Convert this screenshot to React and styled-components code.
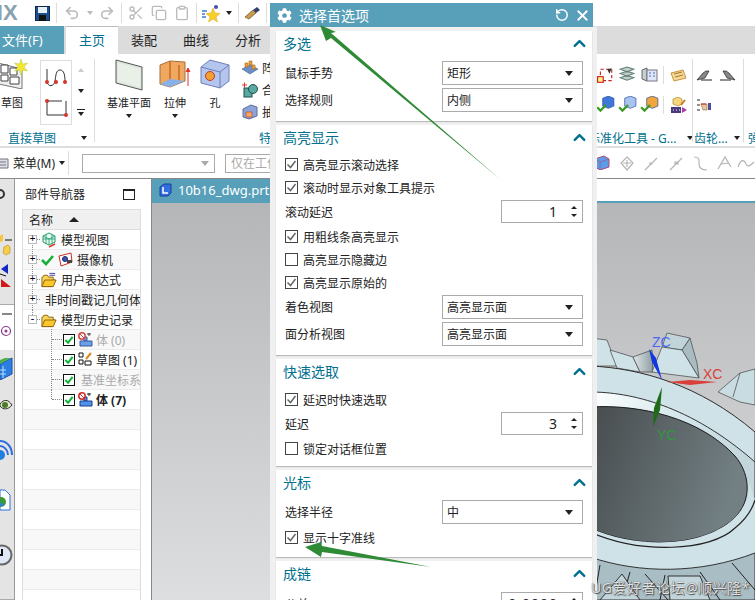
import React from "react";
import styled, { createGlobalStyle } from "styled-components";
import { FaCog } from "react-icons/fa";
import { ChevronUp, Clipboard, Copy, Redo2, RotateCcw, Scissors, Undo2, X } from "lucide-react";

const TEAL = "#589fb9";
const INK = "#00708f";

const GlobalStyle = createGlobalStyle`
  html, body { margin: 0; padding: 0; background: #fff; }
  body {
    font-family: "Noto Sans", "Noto Sans CJK SC", sans-serif;
    font-size: 12px;
    color: #222;
  }
`;

const Page = styled.div`
  position: relative;
  width: 755px;
  height: 600px;
  overflow: hidden;
  display: flex;
  flex-direction: column;
`;

/* quick access bar */
const Quick = styled.div`
  height: 26px;
  display: flex;
  align-items: center;
  background: #fff;
  flex: none;
`;
const Logo = styled.span`
  font-family: "Liberation Sans", sans-serif;
  font-weight: bold;
  font-size: 22px;
  color: #8aa1b0;
  margin-left: -13px;
  width: 48px;
  flex: none;
`;
const QuickBtn = styled.span`
  width: ${(p) => p.$w || 22}px;
  display: flex;
  justify-content: center;
  align-items: center;
  flex: none;
`;
const Caret = styled.i`
  display: block;
  flex: none;
  width: 0;
  height: 0;
  border-left: ${(p) => p.$s || 4}px solid transparent;
  border-right: ${(p) => p.$s || 4}px solid transparent;
  border-top: ${(p) => (p.$s || 4) + 1}px solid ${(p) => p.$c || "#222"};
`;
const CaretUp = styled(Caret)`
  transform: rotate(180deg);
`;

/* tabs */
const Tabs = styled.div`
  height: 28px;
  flex: none;
  display: flex;
  background: #dcdcdc;
`;
const FileTab = styled.div`
  width: 64px;
  margin-right: 2px;
  background: ${TEAL};
  color: #fff;
  font-size: 13px;
  line-height: 28px;
  padding-left: 2px;
  box-sizing: border-box;
`;
const Tab = styled.div`
  width: 52px;
  text-align: center;
  font-size: 13px;
  line-height: 28px;
  color: ${(p) => (p.$active ? INK : "#222")};
  background: ${(p) => (p.$active ? "#fff" : "transparent")};
  box-shadow: ${(p) => (p.$active ? "inset 0 1px 0 #bbb" : "none")};
`;

/* ribbon */
const Ribbon = styled.div`
  height: 92px;
  flex: none;
  display: flex;
  background: #fff;
  border-bottom: 2px solid #dedede;
`;
const Group = styled.div`
  width: ${(p) => p.$w}px;
  flex: none;
  display: flex;
  flex-direction: column;
`;
const GroupBody = styled.div`
  height: 75px;
  display: flex;
`;
const GroupLabel = styled.div`
  height: 17px;
  display: flex;
  align-items: center;
  gap: ${(p) => p.$gap || 0}px;
  padding-left: ${(p) => p.$pad || 0}px;
  margin-left: ${(p) => p.$ml || 0}px;
  color: ${INK};
  font-size: 12px;
  white-space: nowrap;
`;
const Divider = styled.i`
  width: 1px;
  flex: none;
  background: #ddd;
  margin: 5px 0 4px;
`;
const BigBtn = styled.div`
  width: ${(p) => p.$w}px;
  margin-left: ${(p) => p.$ml || 0}px;
  flex: none;
  display: flex;
  flex-direction: column;
  align-items: center;
  font-size: 11px;
  line-height: 16px;
  white-space: nowrap;
  svg { flex: none; }
  span { margin-top: 2px; }
  i { margin-top: 3px; }
`;
const IconTop = styled.div`
  height: 34px;
  width: 100%;
  margin-top: 5px;
  display: flex;
  justify-content: ${(p) => (p.$start ? "flex-start" : "center")};
`;
const SketchBox = styled.div`
  width: 33px;
  height: 65px;
  margin: 6px 0 0 16px;
  border: 1px solid #ddd;
  box-sizing: border-box;
  display: flex;
  flex-direction: column;
  align-items: center;
  justify-content: space-around;
`;
const Spin = styled.div`
  width: 14px;
  margin: 14px 6px 0 2px;
  height: 48px;
  display: flex;
  flex-direction: column;
  align-items: center;
  justify-content: space-between;
`;
const MoreMark = styled.span`
  width: 8px;
  border-top: 1px solid #222;
  display: flex;
  justify-content: center;
  padding-top: 2px;
`;
const SmallList = styled.div`
  margin: 5px 0 0 2px;
  display: flex;
  flex-direction: column;
  gap: 5px;
  font-size: 12px;
`;
const SmallItem = styled.div`
  display: flex;
  align-items: center;
  gap: 4px;
  height: 17px;
  white-space: nowrap;
`;
const RightRibbon = styled.div`
  margin-left: auto;
  width: 161px;
  flex: none;
  display: flex;
  overflow: hidden;
`;
const IconRows = styled.div`
  height: 75px;
  padding-top: 11px;
  box-sizing: border-box;
  display: flex;
  flex-direction: column;
  gap: 10px;
`;
const IconRow = styled.div`
  display: flex;
  align-items: center;
  height: 20px;
`;
const Cell = styled.span`
  width: ${(p) => p.$w || 22}px;
  display: flex;
  justify-content: center;
  flex: none;
`;
const RowSep = styled.i`
  width: 1px;
  height: 18px;
  background: #ddd;
  margin: 0 3px;
  flex: none;
`;

/* command bar */
const CommandBar = styled.div`
  height: 30px;
  flex: none;
  display: flex;
  align-items: center;
  background: #fff;
  border-bottom: 1px solid #888;
`;
const MenuBtn = styled.div`
  display: flex;
  align-items: center;
  width: 68px;
  flex: none;
  gap: 4px;
  font-size: 12px;
  box-sizing: border-box;
  white-space: nowrap;
`;
const BarSep = styled.i`
  width: 1px;
  height: ${(p) => p.$h || 24}px;
  background: #ddd;
  flex: none;
`;
const Combo = styled.div`
  width: ${(p) => p.$w}px;
  height: 19px;
  margin-left: ${(p) => p.$ml}px;
  flex: none;
  border: 1px solid #aaa;
  box-sizing: border-box;
  display: flex;
  align-items: center;
  justify-content: ${(p) => (p.$caret ? "flex-end" : "flex-start")};
  padding: 0 5px;
  color: #aaa;
  overflow: hidden;
  white-space: nowrap;
`;
const RightTools = styled.div`
  margin-left: auto;
  width: 165px;
  flex: none;
  display: flex;
  overflow: hidden;
`;

/* lower part */
const Main = styled.div`
  flex: 1;
  display: flex;
  min-height: 0;
`;
const SideBar = styled.div`
  width: 15px;
  flex: none;
  display: flex;
  flex-direction: column;
  border-right: 1px solid #999;
  box-sizing: border-box;
  overflow: hidden;
`;
const SideBlock = styled.div`
  height: ${(p) => p.$h}px;
  flex: none;
  background: ${(p) => (p.$light ? "#fff" : "#e4e4e4")};
  border-bottom: ${(p) => (p.$light ? "none" : "1px solid #aaa")};
  display: flex;
  flex-direction: column;
  box-sizing: border-box;
`;
const SideIcon = styled.div`
  margin-top: ${(p) => p.$top}px;
  height: ${(p) => p.$h || 16}px;
  svg { display: block; }
`;
const Navigator = styled.div`
  width: 136px;
  flex: none;
  padding: 0 10px 0 7px;
  box-sizing: border-box;
  background: #fff;
  display: flex;
  flex-direction: column;
`;
const NavTitle = styled.div`
  height: 30px;
  padding: 0 6px 0 3px;
  display: flex;
  align-items: center;
  justify-content: space-between;
  font-size: 12px;
`;
const MaxBox = styled.i`
  width: 12px;
  height: 11px;
  border: 1px solid #222;
  border-top-width: 2px;
  box-sizing: border-box;
`;
const TreeTable = styled.div`
  flex: 1;
  border: 1px solid #ddd;
  border-bottom: none;
  box-shadow: inset 1px 0 0 #eee;
  overflow: hidden;
`;
const TreeHead = styled.div`
  height: 20px;
  box-sizing: border-box;
  display: flex;
  align-items: center;
  gap: 16px;
  padding-left: 6px;
  background: #f0f0f0;
  border-bottom: 1px solid #ddd;
`;
const SortUp = styled.i`
  width: 0;
  height: 0;
  border-left: 5px solid transparent;
  border-right: 5px solid transparent;
  border-bottom: 5px solid #222;
`;
const TreeRow = styled.div`
  position: relative;
  height: 20px;
  box-sizing: border-box;
  display: flex;
  align-items: center;
  gap: ${(p) => (p.$child ? 3 : 4)}px;
  padding-left: ${(p) => (p.$child ? 40 : 5)}px;
  background: ${(p) => (p.$alt ? "#f8f8f8" : "#fff")};
  border-bottom: 1px solid #ececec;
  white-space: nowrap;
  color: ${(p) => (p.$dim ? "#aaa" : "#222")};
  font-weight: ${(p) => (p.$bold ? "bold" : "normal")};
  &::before {
    content: "";
    position: absolute;
    left: ${(p) => (p.$child ? 28 : 9)}px;
    top: ${(p) => (p.$first ? 9 : -1)}px;
    height: ${(p) => (p.$last ? 10 : p.$first ? 11 : 21)}px;
    border-left: 1px dotted #888;
  }
  &::after {
    content: "";
    position: absolute;
    left: ${(p) => (p.$child ? 29 : 13)}px;
    top: 9px;
    width: ${(p) => (p.$child ? 10 : 4)}px;
    border-top: 1px dotted #888;
  }
`;
const EmptyRow = styled.div`
  height: 20px;
  box-sizing: border-box;
  background: ${(p) => (p.$alt ? "#f8f8f8" : "#fff")};
  border-bottom: 1px solid #ececec;
`;
const Expander = styled.span`
  position: relative;
  z-index: 1;
  width: 9px;
  height: 9px;
  box-sizing: border-box;
  border: 1px solid #bbb;
  background: #fff;
  color: #000;
  font: 10px/7px "Liberation Mono", monospace;
  text-align: center;
  flex: none;
`;
const RowCheck = styled.span`
  position: relative;
  z-index: 1;
  width: 12px;
  height: 12px;
  box-sizing: border-box;
  border: 1px solid #111;
  background: #fff;
  display: flex;
  align-items: center;
  justify-content: center;
  flex: none;
`;
const Graphics = styled.div`
  flex: 1;
  min-width: 0;
  display: flex;
  flex-direction: column;
  border-left: 1px solid #888;
`;
const DocStrip = styled.div`
  height: 24px;
  flex: none;
  box-sizing: border-box;
  border-bottom: 2px solid ${TEAL};
  background: #fff;
  display: flex;
`;
const DocTab = styled.div`
  width: 140px;
  background: ${TEAL};
  color: #fff;
  font-size: 13px;
  display: flex;
  align-items: center;
  gap: 5px;
  padding-left: 7px;
`;
const Canvas = styled.div`
  flex: 1;
  position: relative;
  overflow: hidden;
  background: linear-gradient(#b5b6b8, #cbccce 55%, #dddee0);
`;
const GearArt = styled.svg`
  position: absolute;
  right: 0;
  bottom: 0;
`;

/* dialog */
const Dialog = styled.div`
  position: absolute;
  left: 270px;
  top: 3px;
  width: 327px;
  bottom: 0;
  display: flex;
  flex-direction: column;
`;
const DialogTitle = styled.div`
  height: 24px;
  width: 323px;
  flex: none;
  background: ${TEAL};
  color: #fff;
  font-size: 14px;
  display: flex;
  align-items: center;
  padding: 0 2px 0 7px;
  box-sizing: border-box;
  gap: 5px;
  span { flex: 1; margin-left: 2px; }
`;
const DialogBody = styled.div`
  flex: 1;
  background: #f0f0f0;
  padding: 4px 5px 0 6px;
  display: flex;
  flex-direction: column;
  gap: 4px;
  overflow: hidden;
`;
const Section = styled.section`
  flex: none;
  display: flex;
  flex-direction: column;
  background: #fff;
  padding: 0 9px ${(p) => p.$bottom ?? 7}px;
  box-shadow: 0 1px 1px #bbb;
`;
const SectionHead = styled.div`
  height: 24px;
  flex: none;
  margin-bottom: ${(p) => p.$gap}px;
  display: flex;
  align-items: center;
  justify-content: space-between;
  color: ${INK};
  font-size: 14px;
  margin-left: -2px;
  margin-right: -6px;
`;
const FieldRow = styled.div`
  height: ${(p) => (p.$num ? 23 : 24)}px;
  flex: none;
  margin-top: 1px;
  margin-bottom: 2px;
  display: flex;
  align-items: center;
  justify-content: space-between;
`;
const Select = styled.div`
  width: 141px;
  height: 100%;
  box-sizing: border-box;
  border: 1px solid #aaa;
  background: #fff;
  display: flex;
  align-items: center;
  justify-content: space-between;
  padding: 0 9px 0 4px;
`;
const NumberBox = styled.div`
  width: 82px;
  height: 100%;
  box-sizing: border-box;
  border: 1px solid #aaa;
  display: flex;
  align-items: center;
  justify-content: flex-end;
  gap: 13px;
  padding-right: 5px;
  font-size: 14px;
  letter-spacing: 1px;
`;
const Stepper = styled.span`
  display: flex;
  flex-direction: column;
  gap: 5px;
`;
const UpTick = styled.i`
  display: block;
  width: 0;
  height: 0;
  border-left: 3px solid transparent;
  border-right: 3px solid transparent;
  border-bottom: 3px solid #222;
`;
const DownTick = styled(UpTick)`
  border-bottom: none;
  border-top: 3px solid #222;
`;
const CheckRow = styled.div`
  height: 23px;
  flex: none;
  display: flex;
  align-items: center;
  gap: 5px;
`;
const Box = styled.span`
  width: 13px;
  height: 13px;
  box-sizing: border-box;
  border: 1px solid #444;
  display: flex;
  align-items: center;
  justify-content: center;
  flex: none;
`;
const Overlay = styled.svg`
  position: absolute;
  left: 0;
  top: 0;
  pointer-events: none;
`;
const Watermark = styled.div`
  position: absolute;
  left: 591px;
  top: 578px;
  font-size: 14px;
  line-height: 20px;
  letter-spacing: 0.5px;
  white-space: nowrap;
  color: rgba(255, 255, 255, 0.85);
  text-shadow: 0 0 1px #333, 1px 1px 1px #555;
`;

const TickMark = ({ c = "#666", s = 11, w = 1.5 }) => (
  <svg width={s} height={s} viewBox="0 0 11 11">
    <path d="M1.5 5.5 4.5 8.5 9.5 2" fill="none" stroke={c} strokeWidth={w} />
  </svg>
);

const Check = ({ on = true, children }) => (
  <CheckRow>
    <Box>{on && <TickMark />}</Box>
    {children}
  </CheckRow>
);

const SelectRow = ({ label, value }) => (
  <FieldRow>
    {label}
    <Select>
      {value}
      <Caret />
    </Select>
  </FieldRow>
);

const NumberRow = ({ label, value }) => (
  <FieldRow $num>
    {label}
    <NumberBox>
      {value}
      <Stepper>
        <UpTick />
        <DownTick />
      </Stepper>
    </NumberBox>
  </FieldRow>
);

const Head = ({ title, gap }) => (
  <SectionHead $gap={gap}>
    {title}
    <ChevronUp size={19} strokeWidth={3} color={INK} />
  </SectionHead>
);

/* drawings */
const SaveIcon = () => (
  <svg width="15" height="15" viewBox="0 0 15 15">
    <rect x="0.5" y="0.5" width="14" height="14" fill="#1d4f8c" stroke="#0b2a55" />
    <rect x="3" y="1" width="9" height="6" fill="#e8eef6" />
    <rect x="4" y="9" width="7" height="6" fill="#111" />
  </svg>
);
const StarIcon = () => (
  <svg width="19" height="17" viewBox="0 0 19 17">
    <path d="M11 3 13 8 18 8.500 14 12 15.500 17 11 14 6.500 17 8 12 4 8.500 9 8Z" fill="#f7cf2d" stroke="#d9a514" strokeWidth=".5" />
    <path d="M0 6h5M0 9h3M0 12h4" stroke="#3a7bd5" strokeWidth="1.500" />
    <circle cx="14" cy="2" r="2" fill="#3f4fb0" />
  </svg>
);
const BrushIcon = () => (
  <svg width="17" height="15" viewBox="0 0 17 15">
    <path d="M1 11 9 4 12 7 5 13Z" fill="#c89b4a" stroke="#6d5020" strokeWidth=".7" />
    <path d="M9 4 13 1 16 4 12 7Z" fill="#34406e" />
  </svg>
);
const SketchIcon = () => (
  <svg width="28" height="30" viewBox="0 0 28 30">
    <path d="M-6 3 22 10V30L-6 24Z" fill="#eee" stroke="#777" />
    <path d="M1 6h7v8H1zM10 9h7v7h-7zM1 16h7v6H1zM10 18h9v7h-9z" fill="#fff" stroke="#444" />
    <path d="M21 0l1.500 5 5-1-3.500 4 3.500 4-5-1-1.500 5-1.500-5-5 1 3.500-4-3.500-4 5 1z" fill="#f4e634" stroke="#b0c840" strokeWidth=".5" />
  </svg>
);
const CurveIcon = () => (
  <svg width="24" height="20" viewBox="0 0 24 20">
    <path d="M3 2V15M3 15C4 20 10 20 11 14 12 8 12 3 16 3 20 3 21 8 21 15" fill="none" stroke="#333" />
    <circle cx="3" cy="15" r="2" fill="#d2362c" />
    <circle cx="12" cy="15" r="2" fill="#d2362c" />
    <circle cx="21" cy="15" r="2" fill="#d2362c" />
  </svg>
);
const RectIcon = () => (
  <svg width="24" height="20" viewBox="0 0 24 20">
    <path d="M3 3V17H22V3" fill="none" stroke="#333" />
    <path d="M3 3H18" stroke="#333" fill="none" />
    <circle cx="3" cy="3" r="2" fill="#d2362c" />
    <circle cx="22" cy="17" r="2" fill="#d2362c" />
  </svg>
);
const PlaneIcon = () => (
  <svg width="28" height="32" viewBox="0 0 28 32">
    <path d="M1 1 27 8V31L1 24Z" fill="#dfe8df" stroke="#555" />
    <path d="M3 4 25 10V28L3 22Z" fill="#e9f0e8" />
  </svg>
);
const ExtrudeIcon = () => (
  <svg width="32" height="32" viewBox="0 0 32 32">
    <path d="M1 6 11 2 26 3V22L11 28 1 25Z" fill="#f0a860" stroke="#a3703a" />
    <path d="M11 2V28M20 6V24" stroke="#d27a30" strokeWidth="2" />
    <path d="M1 25 11 20 26 22 11 28Z" fill="#8ab0e8" />
    <path d="M29 27V10M27 13 29 9 31 13" fill="#e0342b" stroke="#e0342b" />
  </svg>
);
const HoleIcon = () => (
  <svg width="30" height="30" viewBox="0 0 30 30">
    <path d="M1 8 10 1 29 6V22L20 29 1 24Z" fill="#b5c6ee" stroke="#6d7fb6" />
    <path d="M20 13V29M20 13 29 6M20 13 1 8" stroke="#6d7fb6" fill="none" />
    <circle cx="10" cy="17" r="4.500" fill="#f2a12f" stroke="#c0392b" />
  </svg>
);
const BlocksIcon = () => (
  <svg width="16" height="15" viewBox="0 0 16 15">
    <path d="M0 9 8 5 16 9 8 14Z" fill="#6d8fc7" stroke="#44618f" strokeWidth=".6" />
    <path d="M3 3h3v4H3zM7 1h3v4H7zM10 5h3v4h-3z" fill="#ef9f35" stroke="#a86a18" strokeWidth=".6" />
  </svg>
);
const UniteIcon = () => (
  <svg width="16" height="16" viewBox="0 0 16 16">
    <path d="M0 3h5M2.500 .5v5" stroke="#e0342b" />
    <rect x="2" y="6" width="8" height="9" fill="#5aa8a0" stroke="#1f4f4a" />
    <circle cx="11" cy="7" r="4.500" fill="#5aa8a0" stroke="#1f4f4a" />
  </svg>
);
const ShellIcon = () => (
  <svg width="16" height="16" viewBox="0 0 16 16">
    <path d="M1 5 9 1 15 3V12L7 15 1 13Z" fill="#8ca3d8" stroke="#5c6f9f" />
    <path d="M4 8h6v5H4z" fill="#f0a860" stroke="#c0392b" strokeWidth=".6" />
  </svg>
);
const Stack = ({ c = "#5e7f78" }) => (
  <svg width="16" height="18" viewBox="0 0 15 17">
    <path d="M1 3 7.500 1 14 3 7.500 5.500ZM1 7 7.500 5 14 7 7.500 9.500ZM1 11 7.500 9 14 11 7.500 13.500Z" fill="#c4d0c8" stroke={c} />
  </svg>
);
const SelectMark = () => (
  <svg width="17" height="17" viewBox="0 0 15 15">
    <path d="M3 2H13V12H3Z" fill="none" stroke="#c22" strokeDasharray="3 2" />
    <rect x="0.500" y="8.500" width="5" height="5" fill="#fff28a" stroke="#c22" />
    <path d="M9 2 13 1 11 6Z" fill="#333" />
  </svg>
);
const TableMark = () => (
  <svg width="17" height="16" viewBox="0 0 17 16">
    <path d="M1 3 6 1V14L1 12Z" fill="#c4d0c8" stroke="#667" />
    <rect x="6" y="3" width="10" height="11" fill="#dfe7f7" stroke="#778" />
    <path d="M8 6h2M12 6h2M8 9h2M12 9h2" stroke="#4a6fb5" />
  </svg>
);
const TagIcon = () => (
  <svg width="17" height="13" viewBox="0 0 17 13">
    <path d="M1 4 13 1 16 9 4 12Z" fill="#f6d89a" stroke="#c8953b" />
    <path d="M4 5 12 3M5 8 13 6" stroke="#a57a25" />
  </svg>
);
const BlueCheck = ({ tone = "#3e78d9" }) => (
  <svg width="19" height="18" viewBox="0 0 17 16">
    <path d="M6 2 11 0 16 2V9L11 11 6 9Z" fill={tone} stroke="#23479a" strokeWidth=".6" />
    <path d="M1 10 4 13 9 8" fill="none" stroke="#3b9a22" strokeWidth="2" />
  </svg>
);
const ToolBox = () => (
  <svg width="17" height="17" viewBox="0 0 17 17">
    <path d="M3 2 8 0 12 2V7L8 9 3 7Z" fill="#f6d67a" stroke="#9c7a20" strokeWidth=".6" />
    <path d="M1 10H11V16H1Z" fill="#4b3a7c" />
    <path d="M3 13h1M6 13h1M9 13h1" stroke="#fff" />
    <path d="M12 10 17 13 12 16Z" fill="#b03ab0" />
    <path d="M11 8 15 3" stroke="#c87a20" strokeWidth="2" />
  </svg>
);
const WedgeRight = () => (
  <svg width="17" height="13" viewBox="0 0 17 13">
    <path d="M1 11 7 4 10 2 13 2 9 9Z" fill="#888" stroke="#222" strokeWidth=".7" />
    <path d="M5 11H16" stroke="#222" />
  </svg>
);
const WedgeLeft = () => (
  <svg width="17" height="13" viewBox="0 0 17 13">
    <path d="M16 11 10 4 7 2 4 2 8 9Z" fill="#888" stroke="#222" strokeWidth=".7" />
    <path d="M12 11H1" stroke="#222" />
  </svg>
);
const HandIcon = () => (
  <svg width="15" height="14" viewBox="0 0 15 14">
    <path d="M0 2h3M0 7h3M0 12h3" stroke="#222" />
    <path d="M4 6H10V12H6Z" fill="#e8c79a" stroke="#8a6a3a" strokeWidth=".6" />
    <rect x="11" y="5" width="3" height="7" fill="#4b4f9c" />
    <path d="M4 6h5" stroke="#c22" />
  </svg>
);
const CubeTool = () => (
  <svg width="16" height="15" viewBox="0 0 16 15">
    <path d="M1 4 10 1 15 4V12L6 15 1 12Z" fill="#5b9be8" stroke="#b04a7a" />
    <path d="M1 4 6 7 15 4M6 7V15" stroke="#b04a7a" fill="none" strokeWidth=".6" />
  </svg>
);
const GrayTool = ({ d }) => (
  <svg width="18" height="17" viewBox="0 0 18 17">
    <path d={d} fill="none" stroke="#b4b4b4" strokeWidth="1.200" />
  </svg>
);
const MenuIcon = () => (
  <svg width="9" height="14" viewBox="0 0 9 14">
    <path d="M-4 3H8V12H-4Z" fill="#dde" stroke="#777" />
    <path d="M0 6H6M0 9H6" stroke="#777" />
  </svg>
);
const ModelView = () => (
  <svg width="16" height="16" viewBox="0 0 16 16">
    <path d="M8 1 14 4V10L8 13 2 10V4Z" fill="#e8faf0" stroke="#1f9c6a" />
    <path d="M2 4 8 7 14 4M8 7V13M2 7 14 7M5 2.500V11.500M11 2.500V11.500" fill="none" stroke="#1f9c6a" strokeWidth=".8" />
    <path d="M8 15 14 12" stroke="#e0342b" strokeWidth="1.500" />
  </svg>
);
const GreenTick = () => (
  <svg width="13" height="12" viewBox="0 0 13 12">
    <path d="M1 6 5 10 12 2" fill="none" stroke="#18b03a" strokeWidth="2.600" />
  </svg>
);
const CameraIcon = () => (
  <svg width="15" height="15" viewBox="0 0 15 15">
    <path d="M1 4 13 1 14 10 3 14Z" fill="#fff" stroke="#cf2c24" />
    <circle cx="7" cy="7" r="2.500" fill="#4050a8" stroke="#1c2b78" />
    <path d="M9 8h5v3H9z" fill="#444" />
  </svg>
);
const Folder = ({ lines }) => (
  <svg width="16" height="16" viewBox="0 0 17 16">
    <path d="M1 15V5H2L3 3H7L8 5H13V8H15L12 15Z" fill="#f9d456" stroke="#8a6212" />
    <path d="M1 15 4 8H16L13 15Z" fill="#fbc72b" stroke="#8a6212" />
    {lines && <path d="M9 1h6M9 3h6" stroke="#3a3a9c" />}
  </svg>
);
const BodyIcon = ({ dim }) => (
  <svg width="15" height="15" viewBox="0 0 15 15" opacity={dim ? 0.85 : 1}>
    <path d="M6 5h3v4H6z" fill="#5a8ee0" stroke="#1d3f8a" />
    <path d="M2 9H14V14H2Z" fill="#4f92e8" stroke="#1d3f8a" />
    <circle cx="4" cy="4" r="3.200" fill="#fff" stroke="#d22c24" strokeWidth="1.500" />
    <path d="M2 2 6 6" stroke="#d22c24" />
    <path d="M9 2h4M11 1v3" stroke="#222" />
  </svg>
);
const SketchTree = () => (
  <svg width="15" height="15" viewBox="0 0 15 15">
    <path d="M1 1h4v4H1zM1 8h4v4H1zM7 9h6v4H7z" fill="#fff" stroke="#111" />
    <path d="M8 7 13 1" stroke="#d98a1a" strokeWidth="2" />
  </svg>
);
const DatumIcon = () => (
  <svg width="15" height="15" viewBox="0 0 15 15">
    <path d="M1 2V13L12 10 1 5M1 13 8 5" fill="none" stroke="#444" />
    <path d="M1 0v3" stroke="#2a4fd0" />
    <path d="M10 7 14 5" stroke="#1f9c3a" />
  </svg>
);
const FileBlock = () => (
  <svg width="14" height="14" viewBox="0 0 14 14">
    <path d="M1 4 5 1H12V10L9 13H1Z" fill="#2f6fe0" stroke="#1a3f9a" />
    <path d="M4 4v6h5" fill="none" stroke="#fff" strokeWidth="1.500" />
  </svg>
);

const GearScene = () => (
  <GearArt width="165" height="280" viewBox="590 320 165 280">
    <defs>
      <linearGradient id="hole" x1="0" x2="1" y1="0" y2="0.3">
        <stop offset="0" stopColor="#474c4e" />
        <stop offset="1" stopColor="#727f83" />
      </linearGradient>
      <linearGradient id="band" x1="0" x2="1" y1="0" y2="0.4">
        <stop offset="0" stopColor="#fff" />
        <stop offset="0.5" stopColor="#d6e8ed" />
        <stop offset="1" stopColor="#c2d6dc" />
      </linearGradient>
      <linearGradient id="side" x1="0" x2="1" y1="0" y2="0">
        <stop offset="0" stopColor="#dfe8ea" />
        <stop offset="1" stopColor="#8f9da1" />
      </linearGradient>
    </defs>
    {/* teeth */}
    <g stroke="#444" strokeWidth="0.7">
      <path d="M590 338 607 340 617 366 590 366Z" fill="#cfe2e8" />
      <path d="M610 350 633 357 640 372 617 368Z" fill="#cfe2e8" />
      <path d="M633 357 652 350 653 372 640 372Z" fill="url(#side)" />
      <path d="M690 338 697 363 699 378 682 350Z" fill="#a9bcc2" />
      <path d="M667 333 690 338 682 350 662 347Z" fill="#c1d4da" />
      <path d="M662 347 682 350 699 378 652 372Z" fill="#cfe2e8" />
      <path d="M718 392 740 373 755 369 755 405 740 402Z" fill="#c9dce2" />
      <path d="M740 373 733 397" fill="none" />
    </g>
    {/* body */}
    <path d="M590 366C640 368 700 385 755 432V600H590Z" fill="#cfe2e8" stroke="#2c2c2c" />
    <path d="M590 392C630 392 690 405 755 462V520H590Z" fill="url(#band)" stroke="#333" />
    <path d="M590 407C640 404 700 418 735 456 752 476 752 505 730 522 700 546 640 550 590 528Z" fill="url(#hole)" stroke="#1c1c1c" />
    <path d="M590 528C640 550 700 546 730 522 745 510 751 495 748 480L755 500V556H590Z" fill="#cfe2e8" />
    <path d="M590 532C640 554 710 552 735 528 745 520 752 510 755 500" fill="none" stroke="#222" strokeWidth="1.200" />
    {/* lower teeth */}
    <path d="M590 557C640 574 700 574 755 553V600H590Z" fill="#a9bdc4" stroke="#333" />
    <path d="M600 565 594 600M630 572 622 600M645 574 668 600M665 575 660 600M700 572 720 600M732 563 755 590" stroke="#222" fill="none" />
    <path d="M622 574 640 600H600ZM668 576H700L710 600H670Z" fill="#c2d5db" stroke="#333" />
    {/* triad */}
    <path d="M649 349 656 358 662 380 652 362Z" fill="#1237e0" />
    <path d="M662 387 660 410 653 427 654 408Z" fill="#1f6b1a" />
    <path d="M667 382 690 380 717 382 690 385Z" fill="#d9403a" />
    <g fontFamily="Liberation Sans, sans-serif" fontSize="14">
      <text x="652" y="347" fill="#4a67f5">ZC</text>
      <text x="703" y="379" fill="#d9403a">XC</text>
      <text x="657" y="440" fill="#2f9a3e">YC</text>
    </g>
  </GearArt>
);

const tree = [
  { name: "模型视图", icon: <ModelView />, first: true },
  { name: "摄像机", icon: <><GreenTick /><CameraIcon /></>, alt: true },
  { name: "用户表达式", icon: <Folder lines /> },
  { name: "非时间戳记几何体", icon: <Folder />, alt: true },
  { name: "模型历史记录", icon: <Folder />, open: true, last: true },
];
const children = [
  { name: "体 (0)", icon: <BodyIcon dim />, dim: true, alt: true },
  { name: "草图 (1)", icon: <SketchTree /> },
  { name: "基准坐标系 (0)", icon: <DatumIcon />, dim: true, alt: true },
  { name: "体 (7)", icon: <BodyIcon />, bold: true, last: true },
];

export default function App() {
  return (
    <Page>
      <GlobalStyle />
      <Quick>
        <Logo>NX</Logo>
        <QuickBtn $w={15}><SaveIcon /></QuickBtn>
        <QuickBtn $w={13}><BarSep $h={20} /></QuickBtn>
        <QuickBtn $w={18}><Undo2 size={16} color="#bbb" strokeWidth={2.5} /></QuickBtn>
        <QuickBtn $w={18}><Caret $s={3} $c="#bbb" /></QuickBtn>
        <QuickBtn $w={16}><Redo2 size={16} color="#bbb" strokeWidth={2.5} /></QuickBtn>
        <QuickBtn $w={12}><BarSep $h={20} /></QuickBtn>
        <QuickBtn $w={18}><Scissors size={16} color="#bbb" /></QuickBtn>
        <QuickBtn $w={28}><Copy size={16} color="#bbb" /></QuickBtn>
        <QuickBtn $w={18}><Clipboard size={16} color="#bbb" /></QuickBtn>
        <QuickBtn $w={10}><BarSep $h={20} /></QuickBtn>
        <QuickBtn $w={20}><StarIcon /></QuickBtn>
        <QuickBtn $w={16}><Caret $s={3} /></QuickBtn>
        <QuickBtn $w={2}><BarSep $h={20} /></QuickBtn>
        <QuickBtn $w={26}><BrushIcon /></QuickBtn>
        <QuickBtn $w={2}><BarSep $h={20} /></QuickBtn>
      </Quick>

      <Tabs>
        <FileTab>文件(F)</FileTab>
        <Tab $active>主页</Tab>
        <Tab>装配</Tab>
        <Tab>曲线</Tab>
        <Tab>分析</Tab>
      </Tabs>

      <Ribbon>
        <Group $w={94}>
          <GroupBody>
            <BigBtn $w={24}>
              <IconTop $start><SketchIcon /></IconTop>
              <span>草图</span>
            </BigBtn>
            <SketchBox>
              <CurveIcon />
              <RectIcon />
            </SketchBox>
            <Spin>
              <CaretUp $s={3} $c="#ccc" />
              <Caret $s={3} />
              <MoreMark><Caret $s={3} /></MoreMark>
            </Spin>
          </GroupBody>
          <GroupLabel $pad={8} $gap={25}>直接草图<Caret $s={3} /></GroupLabel>
        </Group>
        <Divider />
        <Group $w={240}>
          <GroupBody>
            <BigBtn $w={62} $ml={3}>
              <IconTop><PlaneIcon /></IconTop>
              <span>基准平面</span>
              <Caret $s={3} />
            </BigBtn>
            <BigBtn $w={30}>
              <IconTop><ExtrudeIcon /></IconTop>
              <span>拉伸</span>
              <Caret $s={3} />
            </BigBtn>
            <BigBtn $w={50}>
              <IconTop><HoleIcon /></IconTop>
              <span>孔</span>
            </BigBtn>
            <SmallList>
              <SmallItem><BlocksIcon />阵列特征</SmallItem>
              <SmallItem><UniteIcon />合并</SmallItem>
              <SmallItem><ShellIcon />抽壳</SmallItem>
            </SmallList>
          </GroupBody>
          <GroupLabel $pad={164}>特征</GroupLabel>
        </Group>
        <RightRibbon>
          <Group $w={98}>
            <IconRows>
              <IconRow>
                <Cell><SelectMark /></Cell>
                <Cell><Stack /></Cell>
                <Cell><TableMark /></Cell>
                <RowSep />
                <Cell><TagIcon /></Cell>
              </IconRow>
              <IconRow>
                <Cell><BlueCheck /></Cell>
                <Cell><BlueCheck tone="#a9c4ee" /></Cell>
                <Cell><BlueCheck tone="#f0a63c" /></Cell>
                <RowSep />
                <Cell><ToolBox /></Cell>
              </IconRow>
            </IconRows>
            <GroupLabel $gap={10} $ml={-6}>标准化工具 - G...<Caret $s={3} /></GroupLabel>
          </Group>
          <Divider />
          <Group $w={50}>
            <IconRows>
              <IconRow>
                <Cell><WedgeRight /></Cell>
                <Cell $w={24}><WedgeLeft /></Cell>
              </IconRow>
              <IconRow>
                <Cell><HandIcon /></Cell>
              </IconRow>
            </IconRows>
            <GroupLabel $gap={6} $pad={1}>齿轮...<Caret $s={3} /></GroupLabel>
          </Group>
          <Divider />
          <Group $w={12}>
            <IconRows />
            <GroupLabel $pad={4}>弹簧</GroupLabel>
          </Group>
        </RightRibbon>
      </Ribbon>

      <CommandBar>
        <MenuBtn><MenuIcon />菜单(M)<Caret $s={3} /></MenuBtn>
        <BarSep />
        <Combo $w={133} $ml={13} $caret><Caret $s={4} $c="#aaa" /></Combo>
        <Combo $w={120} $ml={10}>仅在工作部件内</Combo>
        <RightTools>
          <Cell $w={24}><CubeTool /></Cell>
          <Cell $w={25}><GrayTool d="M9 2 15 8 9 15 3 8ZM9 5V12M5 8H13" /></Cell>
          <Cell $w={24}><GrayTool d="M3 15 15 3M8 9h2v-1h-2z" /></Cell>
          <Cell $w={25}><GrayTool d="M3 15 15 3M8 9h3v-2h-3z" /></Cell>
          <Cell $w={24}><GrayTool d="M3 2C9 2 8 5 8 9 8 14 12 15 16 15" /></Cell>
          <Cell $w={25}><GrayTool d="M2 14 9 2 15 12M5 9 13 8" /></Cell>
          <Cell $w={18}><GrayTool d="M1 12C4 4 7 4 9 9 11 13 14 10 17 7" /></Cell>
        </RightTools>
      </CommandBar>

      <Main>
        <SideBar>
          <SideBlock $h={126}>
            <SideIcon $top={8} $h={14}>
              <svg width="14" height="14" viewBox="0 0 14 14"><circle cx="0" cy="7" r="4" fill="none" stroke="#333" strokeWidth="2" /></svg>
            </SideIcon>
            <SideIcon $top={32}>
              <svg width="14" height="24" viewBox="0 0 14 24">
                <path d="M0 3 3 1V8L0 9Z" fill="#f2c63d" />
                <path d="M4 14 8 12 10 14V20L6 22 3 20Z" fill="#f6d04a" stroke="#b48b15" strokeWidth=".6" />
                <path d="M5 7H12" stroke="#111" />
              </svg>
            </SideIcon>
            <SideIcon $top={14} $h={26}>
              <svg width="14" height="26" viewBox="0 0 14 26">
                <path d="M1 6 8 1V11Z" fill="#1428c8" />
                <path d="M1 16 11 24H1Z" fill="#d01818" />
                <path d="M0 11 6 13" stroke="#111" />
              </svg>
            </SideIcon>
          </SideBlock>
          <SideBlock $h={45} $light>
            <SideIcon $top={7} $h={4}>
              <svg width="14" height="4" viewBox="0 0 14 4"><path d="M2 2H12" stroke="#111" /></svg>
            </SideIcon>
            <SideIcon $top={7}>
              <svg width="14" height="16" viewBox="0 0 14 16">
                <circle cx="6" cy="8" r="4.500" fill="none" stroke="#8a3a8a" strokeWidth="1.200" />
                <circle cx="6" cy="8" r="1.500" fill="#8a3a8a" />
              </svg>
            </SideIcon>
          </SideBlock>
          <SideBlock $h={250}>
            <SideIcon $top={6} $h={24}>
              <svg width="14" height="24" viewBox="0 0 14 24">
                <path d="M0 8 12 2V18L0 24Z" fill="#2c7fe0" stroke="#1a4fa8" />
                <path d="M0 4 5 2 11 2 0 8Z" fill="#4fb04a" />
                <path d="M3 10V22M0 14H6M0 18H6" stroke="#b8dcf7" />
              </svg>
            </SideIcon>
            <SideIcon $top={17} $h={14}>
              <svg width="14" height="14" viewBox="0 0 14 14">
                <path d="M0 7C4 2 8 2 12 8 8 13 3 13 0 9Z" fill="#dfe8d0" stroke="#333" />
                <circle cx="5" cy="8" r="3" fill="#4d7a2a" />
              </svg>
            </SideIcon>
            <SideIcon $top={28} $h={28}>
              <svg width="14" height="28" viewBox="0 0 14 28">
                <path d="M0 2C7 2 12 8 12 16M0 7C4 7 8 11 8 16" fill="none" stroke="#2f6fe0" strokeWidth="2" />
                <circle cx="0" cy="16" r="5" fill="#1f7fe0" />
              </svg>
            </SideIcon>
            <SideIcon $top={22} $h={24}>
              <svg width="14" height="24" viewBox="0 0 14 24">
                <path d="M0 1H5L10 6V21H0Z" fill="#fff" stroke="#2f6fe0" />
                <circle cx="1" cy="13" r="5" fill="#3a9a3a" />
                <path d="M-2 13A3 3 0 0 0 4 15Z" fill="#2f7fe0" />
              </svg>
            </SideIcon>
            <SideIcon $top={30} $h={24}>
              <svg width="14" height="24" viewBox="0 0 14 24">
                <circle cx="2" cy="12" r="9.500" fill="#dfe6f5" stroke="#666" strokeWidth="2" />
                <path d="M-2 12H2V6" stroke="#111" strokeWidth="2" fill="none" />
              </svg>
            </SideIcon>
          </SideBlock>
        </SideBar>

        <Navigator>
          <NavTitle>部件导航器<MaxBox /></NavTitle>
          <TreeTable>
            <TreeHead>名称<SortUp /></TreeHead>
            {tree.map((row) => (
              <TreeRow key={row.name} $alt={row.alt} $first={row.first} $last={row.last}>
                <Expander>{row.open ? "-" : "+"}</Expander>
                {row.icon}
                <span>{row.name}</span>
              </TreeRow>
            ))}
            {children.map((row) => (
              <TreeRow key={row.name} $child $alt={row.alt} $last={row.last} $dim={row.dim} $bold={row.bold}>
                <RowCheck><TickMark c="#12b53a" s={10} w={2.2} /></RowCheck>
                {row.icon}
                <span>{row.name}</span>
              </TreeRow>
            ))}
            {Array.from({ length: 10 }, (_, i) => (
              <EmptyRow key={i} $alt={i % 2 === 0} />
            ))}
          </TreeTable>
        </Navigator>

        <Graphics>
          <DocStrip>
            <DocTab><FileBlock />10b16_dwg.prt</DocTab>
          </DocStrip>
          <Canvas>
            <GearScene />
          </Canvas>
        </Graphics>
      </Main>

      <Dialog>
        <DialogTitle>
          <FaCog size={15} />
          <span>选择首选项</span>
          <RotateCcw size={14} strokeWidth={2.5} />
          <X size={17} strokeWidth={2.5} />
        </DialogTitle>
        <DialogBody>
          <Section>
            <Head title="多选" gap={5} />
            <SelectRow label="鼠标手势" value="矩形" />
            <SelectRow label="选择规则" value="内侧" />
          </Section>
          <Section>
            <Head title="高亮显示" gap={4} />
            <Check>高亮显示滚动选择</Check>
            <Check>滚动时显示对象工具提示</Check>
            <NumberRow label="滚动延迟" value="1" />
            <Check>用粗线条高亮显示</Check>
            <Check on={false}>高亮显示隐藏边</Check>
            <Check>高亮显示原始的</Check>
            <SelectRow label="着色视图" value="高亮显示面" />
            <SelectRow label="面分析视图" value="高亮显示面" />
          </Section>
          <Section $bottom={6}>
            <Head title="快速选取" gap={5} />
            <Check>延迟时快速选取</Check>
            <NumberRow label="延迟" value="3" />
            <Check on={false}>锁定对话框位置</Check>
          </Section>
          <Section $bottom={8}>
            <Head title="光标" gap={5} />
            <SelectRow label="选择半径" value="中" />
            <Check>显示十字准线</Check>
          </Section>
          <Section>
            <Head title="成链" gap={6} />
            <NumberRow label="公差" value="0.0000" />
          </Section>
        </DialogBody>
      </Dialog>

      <Overlay width="755" height="600">
        <path d="M320 25 336 32 331 33 501 180 331 38 326 41Z" fill="#2f8a36" />
        <path d="M305 547 321 542 322 546 431 567 322 552 321 557Z" fill="#2f8a36" />
      </Overlay>
      <Watermark>UG爱好者论坛@顺兴隆*</Watermark>
    </Page>
  );
}
